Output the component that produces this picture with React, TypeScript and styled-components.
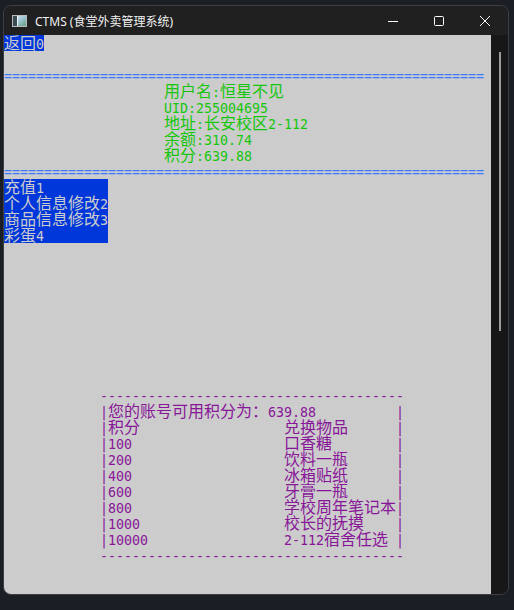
import React from "react";
import styled, { createGlobalStyle } from "styled-components";

const GlobalStyle = createGlobalStyle`
  html, body { margin: 0; padding: 0; }
  body {
    background: #1b1e25;
    width: 514px;
    height: 610px;
    overflow: hidden;
  }
`;

const C = {
  bg: "#cccccc",
  line: "#3b78ff",
  green: "#16c60c",
  purple: "#881798",
  hiBg: "#0037da",
  hiFg: "#cccccc",
};

const Desktop = styled.div`
  padding: 5px 0 0 3px;
`;

const Window = styled.div`
  width: 504px;
  border: 1px solid #3c3f44;
  border-radius: 8px;
  overflow: hidden;
  background: #202020;
  display: flex;
  flex-direction: column;
`;

const TitleBar = styled.div`
  height: 29px;
  display: flex;
  align-items: center;
  background: #202020;
  color: #ffffff;
`;

const AppIcon = styled.svg`
  margin-left: 8px;
  margin-top: 1px;
  flex: none;
`;

const Title = styled.div`
  margin-left: 8px;
  margin-top: 1px;
  font-family: "Noto Sans", "Noto Sans CJK SC", sans-serif;
  font-size: 12px;
  color: #f2f2f2;
  flex: 1;
  white-space: nowrap;
`;

const Controls = styled.div`
  display: flex;
  height: 29px;
`;

const ControlButton = styled.div`
  width: 46px;
  height: 29px;
  display: flex;
  align-items: center;
  justify-content: center;
`;

const Body = styled.div`
  display: flex;
  height: 559px;
`;

const Console = styled.div`
  width: 487px;
  background: ${C.bg};
  display: flex;
  flex-direction: column;
`;

const ScrollTrack = styled.div`
  width: 17px;
  background: #171717;
  padding-top: 17px;
  box-sizing: border-box;
`;

const ScrollThumb = styled.div`
  width: 2px;
  height: 279px;
  margin-left: 8px;
  background: #9b9b9b;
`;

const Row = styled.div`
  display: flex;
  height: 16px;
`;

const Seg = styled.span<{ $fg: string; $bg?: string }>`
  display: flex;
  height: 16px;
  color: ${(p) => p.$fg};
  background: ${(p) => p.$bg ?? "transparent"};
`;

const Cell = styled.span<{ $wide: boolean }>`
  display: block;
  width: ${(p) => (p.$wide ? 16 : 8)}px;
  height: 16px;
  text-align: center;
  white-space: pre;
  font-family: ${(p) =>
    p.$wide
      ? '"Noto Sans CJK SC", "Noto Sans CJK JP", sans-serif'
      : '"DejaVu Sans Mono", "Liberation Mono", monospace'};
  font-size: ${(p) => (p.$wide ? "16px" : "13.3px")};
  line-height: ${(p) => (p.$wide ? 14 : 19)}px;
`;

const isWide = (ch: string) => ch.charCodeAt(0) >= 0x1100;
const cols = (s: string) => Array.from(s).reduce((n, ch) => n + (isWide(ch) ? 2 : 1), 0);
const padTo = (s: string, n: number) => s + " ".repeat(Math.max(0, n - cols(s)));
const sp = (n: number) => " ".repeat(n);

type SegData = { text: string; fg: string; bg?: string };
type RowData = SegData[];

const Text: React.FC<{ text: string }> = ({ text }) => (
  <>
    {Array.from(text).map((ch, i) => (
      <Cell key={i} $wide={isWide(ch)}>
        {ch}
      </Cell>
    ))}
  </>
);

const hi = (t: string): RowData => [{ text: padTo(t, 13), fg: C.hiFg, bg: C.hiBg }];
const green = (t: string): RowData => [{ text: sp(20) + t, fg: C.green }];
const purple = (t: string): RowData => [{ text: t, fg: C.purple }];
const eqLine: RowData = [{ text: "=".repeat(60), fg: C.line }];
const dashLine = purple(sp(12) + "-".repeat(38));
const tableRow = (l: string, r: string) => purple(sp(12) + "|" + padTo(l, 22) + padTo(r, 14) + "|");

const empty: RowData = [];

const rows: RowData[] = [
  [{ text: "返回0", fg: C.hiFg, bg: C.hiBg }],
  empty,
  eqLine,
  green("用户名:恒星不见"),
  green("UID:255004695"),
  green("地址:长安校区2-112"),
  green("余额:310.74"),
  green("积分:639.88"),
  eqLine,
  hi("充值1"),
  hi("个人信息修改2"),
  hi("商品信息修改3"),
  hi("彩蛋4"),
  empty,
  empty,
  empty,
  empty,
  empty,
  empty,
  empty,
  empty,
  empty,
  dashLine,
  purple(sp(12) + "|" + padTo("您的账号可用积分为：639.88", 36) + "|"),
  tableRow("积分", "兑换物品"),
  tableRow("100", "口香糖"),
  tableRow("200", "饮料一瓶"),
  tableRow("400", "冰箱贴纸"),
  tableRow("600", "牙膏一瓶"),
  tableRow("800", "学校周年笔记本"),
  tableRow("1000", "校长的抚摸"),
  tableRow("10000", "2-112宿舍任选"),
  dashLine,
];

export default function App() {
  return (
    <>
      <GlobalStyle />
      <Desktop>
        <Window>
          <TitleBar>
            <AppIcon width="15" height="12" viewBox="0 0 15 12">
              <defs>
                <linearGradient id="ig" x1="0" y1="0" x2="1" y2="1">
                  <stop offset="0" stopColor="#e8eef2" />
                  <stop offset="0.5" stopColor="#9fc4d4" />
                  <stop offset="1" stopColor="#5a9a78" />
                </linearGradient>
              </defs>
              <rect x="0.5" y="0.5" width="14" height="11" fill="url(#ig)" stroke="#b8bcc0" />
              <rect x="1" y="1" width="4" height="10" fill="#3a4a52" />
              <rect x="5" y="1" width="1" height="10" fill="#f4f6f8" />
            </AppIcon>
            <Title>CTMS (食堂外卖管理系统)</Title>
            <Controls>
              <ControlButton>
                <svg width="10" height="10" viewBox="0 0 10 10">
                  <line x1="0" y1="5.5" x2="10" y2="5.5" stroke="#ffffff" strokeWidth="1" />
                </svg>
              </ControlButton>
              <ControlButton>
                <svg width="10" height="10" viewBox="0 0 10 10">
                  <rect x="0.5" y="0.5" width="9" height="9" rx="1" fill="none" stroke="#ffffff" strokeWidth="1" />
                </svg>
              </ControlButton>
              <ControlButton>
                <svg width="10" height="10" viewBox="0 0 10 10">
                  <path d="M0 0 L10 10 M10 0 L0 10" stroke="#ffffff" strokeWidth="1" />
                </svg>
              </ControlButton>
            </Controls>
          </TitleBar>
          <Body>
            <Console>
              {rows.map((r, i) => (
                <Row key={i}>
                  {r.map((s, j) => (
                    <Seg key={j} $fg={s.fg} $bg={s.bg}>
                      <Text text={s.text} />
                    </Seg>
                  ))}
                </Row>
              ))}
            </Console>
            <ScrollTrack>
              <ScrollThumb />
            </ScrollTrack>
          </Body>
        </Window>
      </Desktop>
    </>
  );
}
